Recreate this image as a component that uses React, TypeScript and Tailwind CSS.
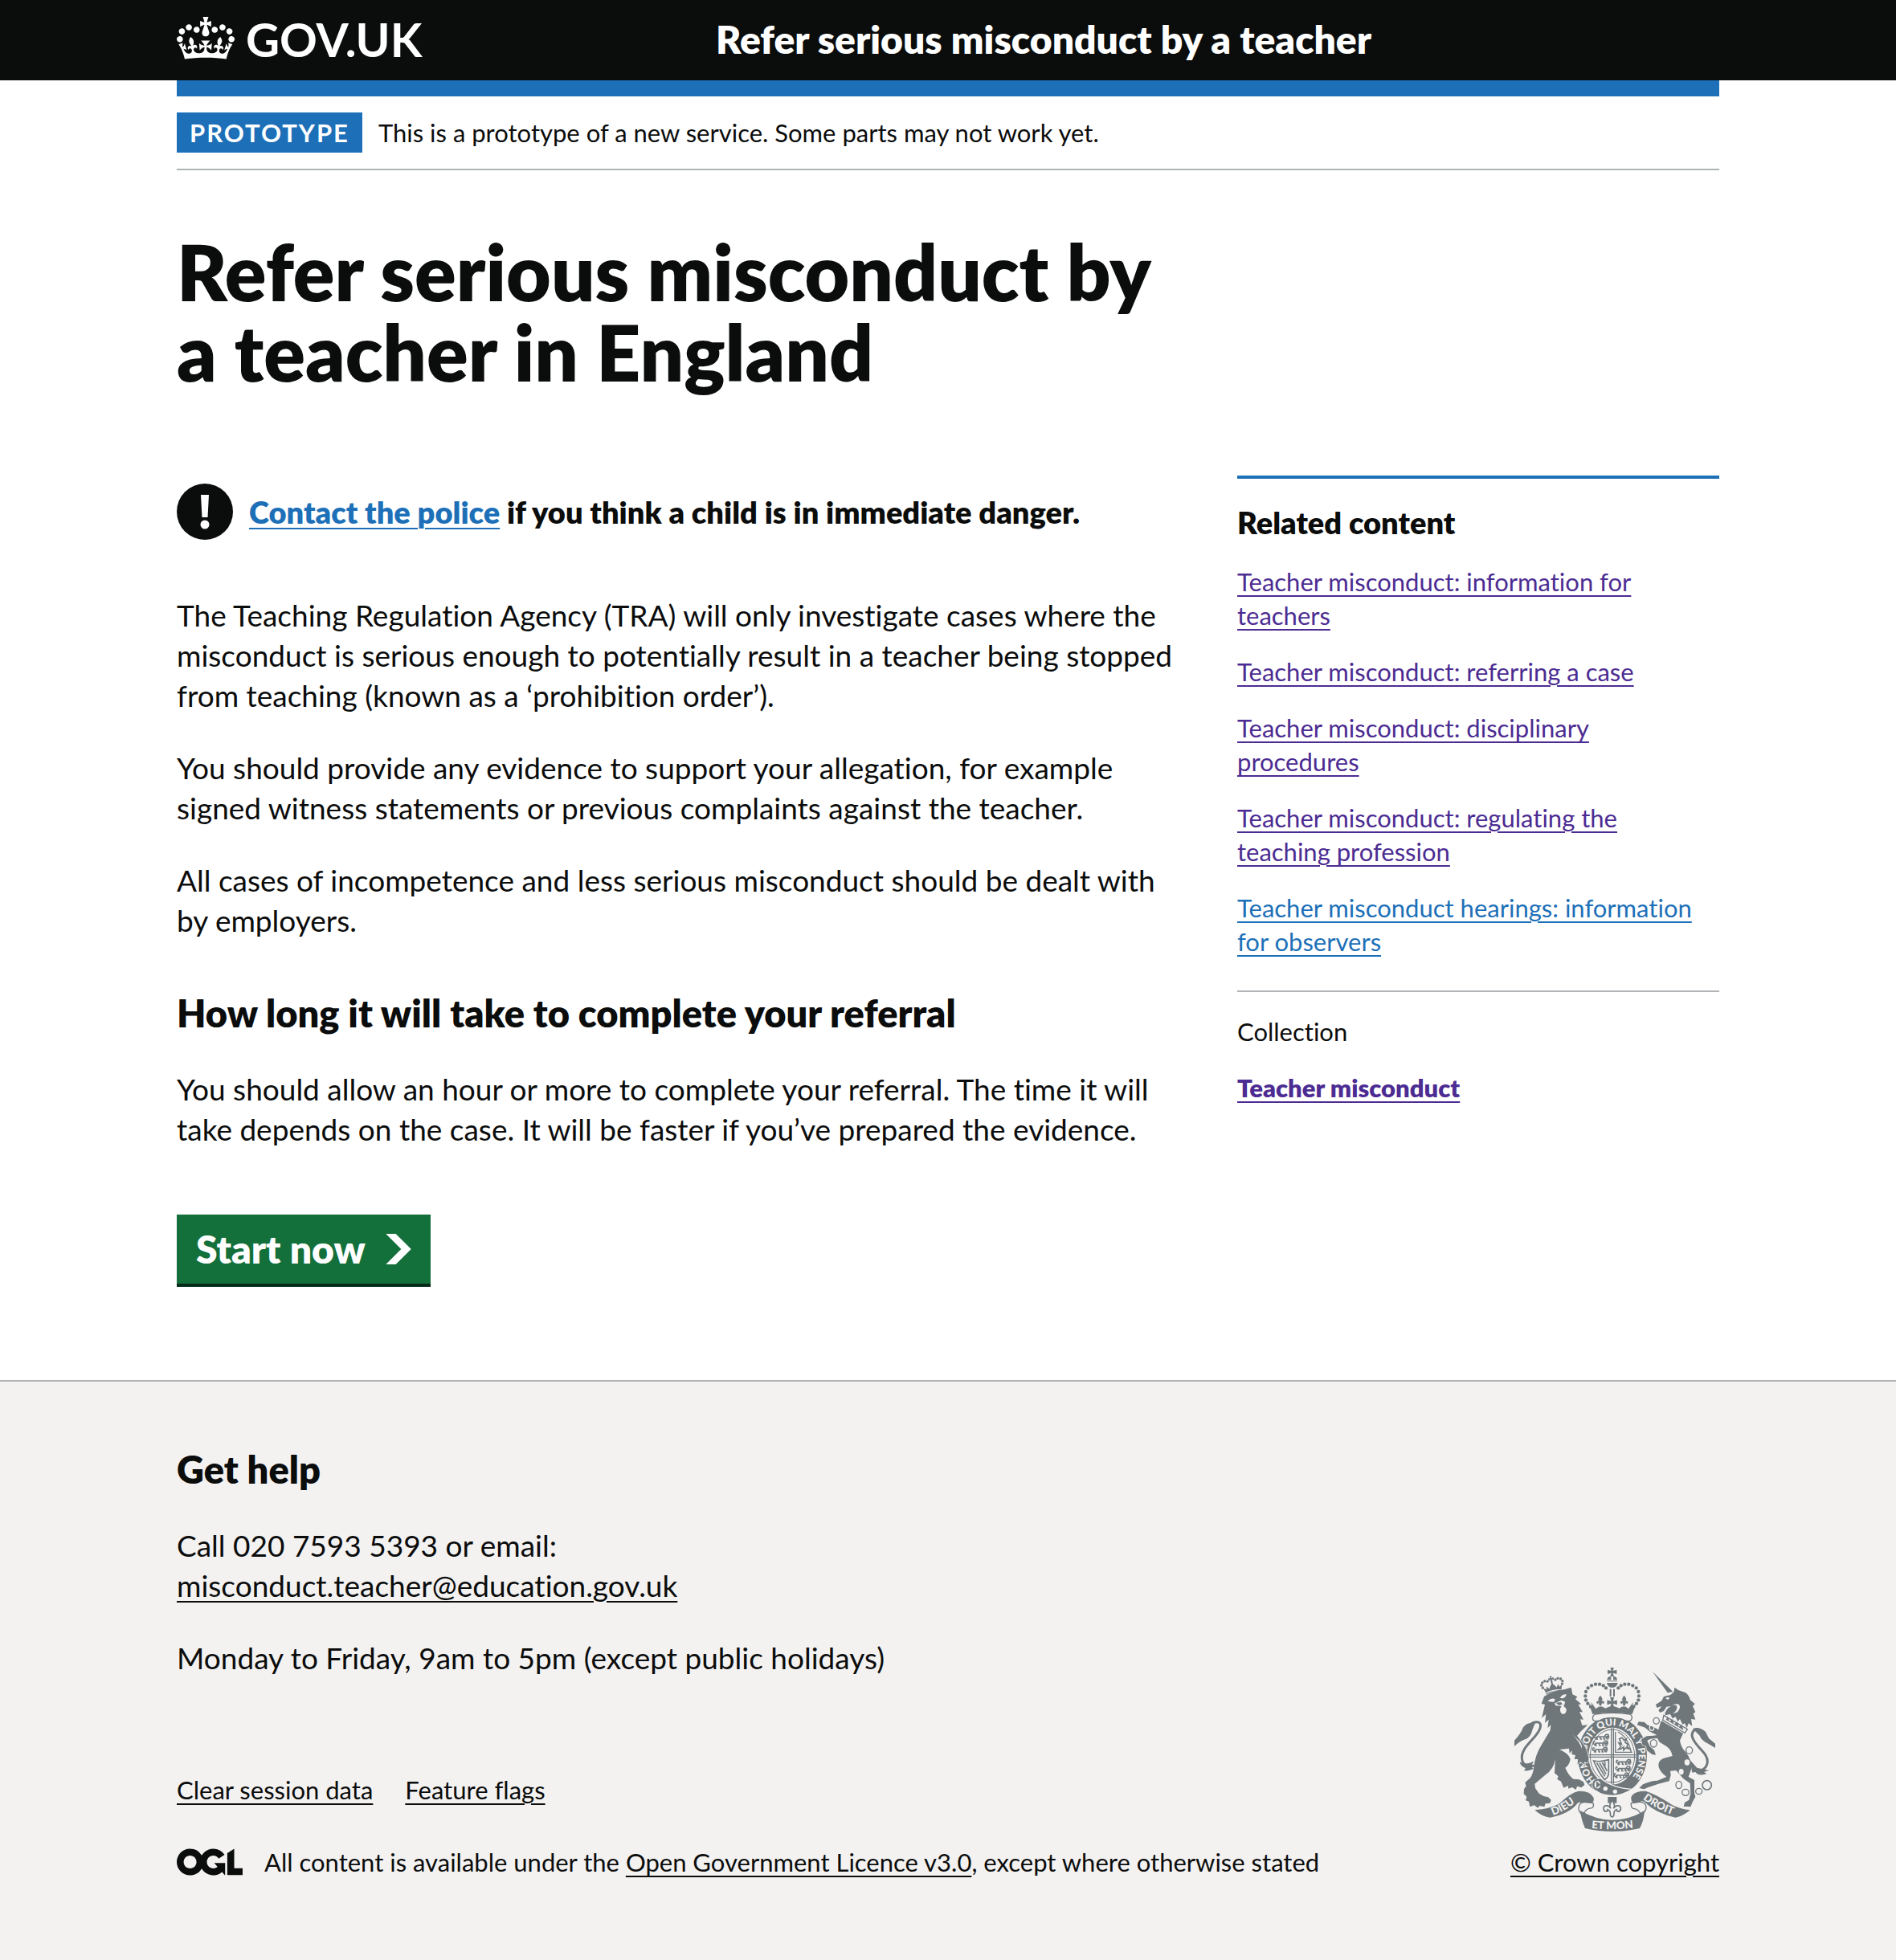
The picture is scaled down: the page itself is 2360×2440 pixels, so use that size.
import React from "react";

const textLink = "underline decoration-2 underline-offset-[5px]";

function CrownIcon() {
  return (
    <svg viewBox="0 0 132 97" className="mb-1 h-[53px] w-[72px] fill-current" aria-hidden="true">
      <path d="M25 30.2c3.5 1.5 7.7-.2 9.1-3.7 1.5-3.6-.2-7.8-3.9-9.2-3.6-1.4-7.6.3-9.1 3.9-1.4 3.5.3 7.5 3.9 9zM9 39.5c3.6 1.5 7.8-.2 9.2-3.7 1.5-3.6-.2-7.8-3.9-9.1-3.6-1.5-7.6.2-9.1 3.8-1.4 3.5.3 7.5 3.8 9zM4.4 57.2c3.5 1.5 7.7-.2 9.1-3.8 1.5-3.6-.2-7.7-3.9-9.1-3.5-1.5-7.6.3-9.1 3.8-1.4 3.5.3 7.6 3.9 9.1zm38.3-21.4c3.5 1.5 7.7-.2 9.1-3.8 1.5-3.6-.2-7.7-3.9-9.1-3.6-1.5-7.6.3-9.1 3.8-1.3 3.6.4 7.7 3.9 9.1zm64.4-5.6c-3.6 1.5-7.8-.2-9.1-3.7-1.5-3.6.2-7.8 3.8-9.2 3.6-1.4 7.7.3 9.2 3.9 1.3 3.5-.4 7.5-3.9 9zm15.9 9.3c-3.6 1.5-7.7-.2-9.1-3.7-1.5-3.6.2-7.8 3.7-9.1 3.6-1.5 7.7.2 9.2 3.8 1.5 3.5-.3 7.5-3.8 9zm4.7 17.7c-3.6 1.5-7.8-.2-9.2-3.8-1.5-3.6.2-7.7 3.9-9.1 3.6-1.5 7.7.3 9.2 3.8 1.3 3.5-.4 7.6-3.9 9.1zM89.3 35.8c-3.6 1.5-7.8-.2-9.2-3.8-1.4-3.6.2-7.7 3.9-9.1 3.6-1.5 7.7.3 9.2 3.8 1.4 3.6-.3 7.7-3.9 9.1zM69.7 17.7l8.9 4.7V9.3l-8.9 2.8c-.2-.3-.5-.6-.9-.9L72.4 0H59.6l3.5 11.2c-.3.3-.6.5-.9.9l-8.8-2.8v13.1l8.8-4.7c.3.3.6.7.9.9l-5 15.4v.1c-.2.8-.4 1.6-.4 2.4 0 4.1 3.1 7.5 7 8.1h.2c.3 0 .7.1 1 .1.4 0 .7 0 1-.1h.2c4-.6 7.1-4.1 7.1-8.1 0-.8-.1-1.7-.4-2.4V34l-5.1-15.4c.4-.2.7-.6 1-.9zM66 92.8c16.9 0 32.8 1.1 47.1 3.2 4-16.9 8.9-26.7 14-33.5l-9.6-3.4c1 4.9 1.1 7.2 0 10.2-1.5-1.4-3-4.3-4.2-8.7L108.6 76c2.8-2 5-3.2 7.5-3.3-4.4 9.4-10 11.9-13.6 11.2-4.3-.8-6.3-4.6-5.6-7.9 1-4.7 5.7-5.9 8-.5 4.3-8.7-3-11.4-7.6-8.8 7.1-7.2 7.9-13.5 2.1-21.1-8 6.1-8.1 12.3-4.5 20.8-4.7-5.4-12.1-2.5-9.5 6.2 3.4-5.2 7.9-2 7.2 3.1-.6 4.3-6.4 7.8-13.5 7.2-10.3-.9-10.9-8-11.2-13.8 2.5-.5 7.1 1.8 11 7.3L80.2 60c-4.1 4.4-8 5.3-12.3 5.4 1.4-4.4 8-11.6 8-11.6H55.5s6.4 7.2 7.9 11.6c-4.2-.1-8-1-12.3-5.4l1.4 16.4c3.9-5.5 8.5-7.7 10.9-7.3-.3 5.8-.9 12.8-11.1 13.8-7.2.6-12.9-2.9-13.5-7.2-.7-5 3.8-8.3 7.1-3.1 2.7-8.7-4.6-11.6-9.4-6.2 3.7-8.5 3.6-14.7-4.6-20.8-5.8 7.6-5 13.9 2.2 21.1-4.7-2.6-11.9.1-7.7 8.8 2.3-5.5 7.1-4.2 8.1.5.7 3.3-1.3 7.1-5.7 7.9-3.5.7-9-1.8-13.5-11.2 2.5.1 4.7 1.3 7.5 3.3l-4.7-15.4c-1.2 4.4-2.7 7.2-4.3 8.7-1.1-3-.9-5.3 0-10.2l-9.5 3.4c5 6.9 9.9 16.7 14 33.5 14.8-2.1 30.8-3.2 47.7-3.2z" />
    </svg>
  );
}

function OglLogo() {
  return (
    <svg viewBox="0 0 483.2 195.7" className="h-[34px] w-[82px] shrink-0 fill-current" role="img" aria-label="Open Government Licence">
      <path d="M421.5 142.8V.1l-50.7 32.3v161.1h112.4v-50.7zm-122.3-9.6A47.12 47.12 0 0 1 221 97.8c0-26 21.1-47.1 47.1-47.1 16.7 0 31.4 8.7 39.7 21.8l42.7-27.2A97.63 97.63 0 0 0 268.1 0c-36.5 0-68.3 20.1-85.1 49.7A98 98 0 0 0 97.8 0C43.9 0 0 43.9 0 97.8s43.9 97.8 97.8 97.8c36.5 0 68.3-20.1 85.1-49.7a97.76 97.76 0 0 0 149.6 25.4l19.4 22.2h3v-87.8h-80l24.3 27.5zM97.8 145c-26 0-47.1-21.1-47.1-47.1s21.1-47.1 47.1-47.1 47.1 21.1 47.1 47.1S123.8 145 97.8 145" />
    </svg>
  );
}

function WarningIcon() {
  return (
    <svg viewBox="0 0 70 70" className="size-[70px] shrink-0" role="img" aria-label="Warning">
      <circle cx="35" cy="35" r="35" fill="#0b0c0c" />
      <path d="M30 14h10l-1.5 28h-7z" fill="#fff" />
      <circle cx="35" cy="51" r="5.5" fill="#fff" />
    </svg>
  );
}

const arcDots: [number, number][] = [
  [357, 224], [346, 212], [339, 199], [337, 184], [339, 168], [347, 154], [360, 145], [375, 140], [390, 140], [404, 145], [414, 154],
];

const smallCrownDots: [number, number][] = [
  [176, 146], [173, 136], [178, 127], [188, 123], [198, 126], [228, 126], [238, 123], [248, 127], [253, 136], [250, 146],
];

function Fleur() {
  return <path d="M0-18C9-8 9-2 4 6C8 0 16 2 14 10C12 15 8 14 8 10C6 10 4 13 4 20H-4C-4 13-6 10-8 10C-8 14-12 15-14 10C-16 2-8 0-4 6C-9-2-9-8 0-18Z" />;
}

function CrossPatty() {
  return <path d="M-7-17H7L3-4L17-8V8L3 4L7 17H-7L-3 4L-17 8V-8L-3-4Z" />;
}

/* A passant lion, used in threes on the first and last quarters. */
function SmallLion() {
  return (
    <path
      d="M-30 5C-34-6-27-9-26-3M-28 6L-20 0H6L12-8H20L22-2L15 0L24 4M10 0L16 8H22M-20 1L-24 9H-18M-10 1L-8 9H-3M4 1V9H10"
      fill="none"
      strokeWidth="5"
    />
  );
}

function RoyalArms() {
  return (
    <svg viewBox="72 78 750 612" className="h-[204px] w-[250px]" fill="#6f777b" stroke="none" aria-hidden="true">
      <defs>
        <path id="garter" d="M376 500A98 116 0 1 1 494 506" />
        <path id="dieu" d="M214 630Q270 612 318 566" />
        <path id="etmon" d="M330 675Q438 689 546 673" />
        <path id="droit" d="M550 568Q600 606 668 630" />
      </defs>

      {/* Garter with motto */}
      <path fillRule="evenodd" d="M438 260A129 148 0 1 1 437.900 260ZM438 302A89 106 0 1 0 438.100 302Z" />
      <text fill="#f3f2f1" className="font-['Lato'] text-[36px] font-black">
        <textPath href="#garter">{"HONI\u2003SOIT QUI MAL Y PENSE"}</textPath>
      </text>

      {/* Lion's crown */}
      <g transform="rotate(-12 213 140)">
        <path d="M183 166L178 148L188 155L191 144L199 155L207 142H219L227 155L235 144L238 155L249 148L243 166Q213 158 183 166Z" />
        <path d="M183 169Q213 162 243 169V176Q213 169 183 176Z" />
        <g transform="translate(213 120) scale(.6)"><CrossPatty /></g>
        <rect x="210" y="128" width="6" height="18" />
        {smallCrownDots.map(([x, y]) => (
          <circle key={x + "-" + y} cx={x} cy={y} r="5" />
        ))}
      </g>

      {/* Lion */}
      <path
        d="M183 186Q215 162 258 160L284 152L289 178L307 187L300 196L321 214L311 217L327 244L315 244L330 272L318 271L325 294L346 292L322 314L306 332L324 356Q342 380 346 402L350 420L345 434L332 430L336 441L318 430L308 440L309 420L296 420L300 405L286 402L288 388L278 398L276 380L240 384Q276 398 281 420Q278 442 262 452Q272 478 292 494L314 496L330 505L334 516L322 526L306 521L302 534L288 525L274 530L272 519L256 527L246 503L232 495L236 484L222 472Q224 444 224 420Q220 458 186 480L148 512L150 528L164 548Q180 560 198 562L209 572L205 584L188 586L184 598L166 594L160 602L146 592L130 598L126 578L114 574L118 560L107 550L108 532L116 520L112 508L122 498Q138 490 144 456Q148 404 176 362L206 312L208 292L196 304L200 272L186 284L190 252L174 266L186 216L173 213Z"
        stroke="#f3f2f1"
        strokeWidth="4"
        paintOrder="stroke"
      />
      <g fill="#f3f2f1">
        <path d="M196 203Q212 188 224 196L220 206Q208 206 196 203Z" />
        <path d="M242 191Q252 176 266 178Q264 190 252 193Z" />
        <path d="M222 211L248 200L262 206L256 222L266 232Q268 250 254 252Q242 250 243 232L248 222L226 220Z" />
        <path d="M288 328L314 352Q326 366 324 380Q316 356 288 328Z" />
      </g>
      <path d="M226 209L246 207L252 215L238 219Z" />

      {/* Lion's tail */}
      <path d="M146 444Q108 452 101 424C90 376 156 344 168 304C178 272 142 280 132 292" fill="none" stroke="#6f777b" strokeWidth="9" />
      <path d="M150 284Q120 280 104 302Q98 322 72 350V372Q90 354 112 346Q134 338 140 308Z" />
      <path d="M92 430Q112 444 144 428L134 448L144 456Q122 466 108 462L114 454Q94 446 92 430Z" />

      {/* Shield quarters */}
      <g stroke="#6f777b" strokeWidth="4" fill="none">
        <ellipse cx="438" cy="408" rx="83" ry="99" strokeWidth="3" />
        <path d="M434 304V512M442 304V512M350 404H526M350 412H526" />
        <path d="M449 318V394H512M458 318Q496 336 508 394" />
      </g>
      <g stroke="#6f777b">
        <g transform="translate(402 336)"><SmallLion /></g>
        <g transform="translate(398 360)"><SmallLion /></g>
        <g transform="translate(396 384)"><SmallLion /></g>
        <g transform="translate(484 430)"><SmallLion /></g>
        <g transform="translate(482 455)"><SmallLion /></g>
        <g transform="translate(476 480)"><SmallLion /></g>
        <path d="M460 384L470 374L462 360L472 364L464 344L474 340L482 350L490 344L486 358L496 364L492 372L502 382L488 378L480 386L480 374L470 382Z" fill="none" strokeWidth="5" />
        <path d="M368 426Q392 432 424 422V468Q424 490 408 496Q386 470 368 426ZM380 434L410 484M390 434L414 476M400 432L418 464M410 430V452" fill="none" strokeWidth="5" />
      </g>

      {/* Garter strap and buckle */}
      <path d="M366 500L392 490Q440 530 512 532Q460 566 404 552Q378 544 362 520Z" stroke="#f3f2f1" strokeWidth="4" />
      <ellipse cx="382" cy="515" rx="15" ry="18" fill="#f3f2f1" stroke="#6f777b" strokeWidth="7" />
      <path d="M378 502L394 515L378 528Z" />
      <circle cx="412" cy="530" r="8" fill="#f3f2f1" />
      <circle cx="448" cy="541" r="8" fill="#f3f2f1" />

      {/* Pendant */}
      <path d="M421 561H454V584H421Z" />
      <path d="M437 574C448 588 448 596 442 604C452 588 470 592 469 606C466 620 452 616 454 608C448 610 444 614 444 622C444 640 430 640 430 622C430 614 426 610 420 608C422 616 408 620 405 606C404 592 422 588 432 604C426 596 426 588 437 574Z" fill="#f3f2f1" stroke="#6f777b" strokeWidth="5" />

      {/* Royal crown */}
      <g transform="translate(437 94)"><CrossPatty /></g>
      <path d="M425 112H433V124H418Q418 116 425 112ZM441 112H449Q456 116 456 124H441ZM418 127H456V130H418ZM417 135H458Q456 152 437 153Q420 152 417 135Z" />
      <path d="M428 158H434V186H428ZM441 158H447V186H441Z" />
      {arcDots.map(([x, y]) => (
        <g key={x + "-" + y}>
          <circle cx={x} cy={y} r="6.500" />
          <circle cx={874 - x} cy={y} r="6.500" />
        </g>
      ))}
      <g transform="translate(393 200)"><Fleur /></g>
      <g transform="translate(482 200)"><Fleur /></g>
      <g transform="translate(437 208) scale(1.1)"><CrossPatty /></g>
      <path d="M350 212L362 222L358 206L376 232Q393 214 412 230Q437 214 464 230Q482 214 498 232L516 206L512 222L526 212L512 252Q437 240 364 252Z" />
      <path d="M374 252Q437 242 504 252Q516 260 508 274Q498 284 474 270Q437 260 402 270Q376 284 366 274Q360 260 374 252Z" fill="#f3f2f1" stroke="#6f777b" strokeWidth="4" />

      {/* Unicorn */}
      <path d="M588 93L664 168L644 172Z" />
      <path d="M655 180L668 168L670 152L684 162L712 172Q726 184 728 198L746 214L738 222L748 244L740 250L748 272L732 270L736 296L722 286L716 304L708 286L700 290L690 270L682 280L674 262L662 268L654 252L636 256L634 248Q644 226 658 222L640 224L630 240L616 246L610 238L622 222L604 228L600 216L622 202L630 186Z" />
      <path d="M636 192Q648 186 652 192L644 198ZM660 218Q690 206 690 226Q688 246 664 250Q684 236 678 220Q670 216 660 218Z" fill="#f3f2f1" />
      <path d="M630 256L718 308L708 322L626 274Z" fill="#f3f2f1" stroke="#6f777b" strokeWidth="4" />
      <path d="M638 272L644 262L652 280L662 270L668 290L680 280L686 300L696 290L704 312Z" />
      <path
        d="M620 276L702 324L690 350Q694 376 712 394Q736 424 732 458L722 486L744 498V546L748 560L738 578L730 598L704 596L708 582L724 572L730 548L728 510L702 492L676 462L654 464L656 480L650 502L610 512L570 526L556 532L538 528L552 514Q580 500 606 500L640 486Q608 462 610 438Q614 418 640 414L662 408Q658 384 640 372L614 356L606 342Q576 342 568 352L578 372L594 386L600 404L586 402L566 386L564 372L550 366L546 346L566 334L592 332L604 330L576 316L560 302L544 296L530 292L536 280L558 282L568 292L592 300L610 310Z"
        stroke="#f3f2f1"
        strokeWidth="4"
        paintOrder="stroke"
      />
      <path d="M738 306Q762 296 786 318L798 342L822 362V378L796 362Q770 350 764 332Z" />
      <path d="M762 312C738 302 728 328 742 350C758 380 794 398 793 430C790 456 770 466 748 462" fill="none" stroke="#6f777b" strokeWidth="9" />
      <path d="M700 392L754 452L798 462L780 468L790 474Q760 486 748 468L736 470L730 440Z" />
      <g fill="#f3f2f1">
        <ellipse cx="717" cy="432" rx="10" ry="11" />
        <ellipse cx="695" cy="467" rx="9" ry="11" />
      </g>
      <g fill="none" stroke="#6f777b" strokeWidth="4">
        <ellipse cx="602" cy="277" rx="11" ry="12" />
        <ellipse cx="585" cy="302" rx="8" ry="11" stroke="#f3f2f1" />
        <ellipse cx="592" cy="361" rx="12" ry="14" />
        <ellipse cx="725" cy="387" rx="12" ry="13" />
        <ellipse cx="686" cy="516" rx="11" ry="14" />
        <ellipse cx="711" cy="544" rx="13" ry="12" />
        <ellipse cx="761" cy="540" rx="12" ry="11" />
        <circle cx="791" cy="517" r="17" strokeWidth="5" />
      </g>

      {/* Ribbon */}
      <path d="M148 610Q206 606 240 586Q280 546 312 539Q356 538 368 564Q372 584 350 590Q318 576 308 584Q280 622 206 638Q176 636 148 610Z" />
      <path d="M728 610Q690 606 660 590Q600 550 562 539Q518 538 508 562Q506 580 524 590Q544 572 556 578Q600 622 674 638Q700 634 728 610Z" />
      <g fill="#f3f2f1" stroke="#6f777b" strokeWidth="4">
        <path d="M350 582Q312 574 312 606Q314 622 330 630Q334 604 362 602Q370 596 366 584Z" />
        <path d="M524 582Q562 574 564 600Q564 616 544 630Q540 606 514 604Q506 598 508 584Z" />
      </g>
      <path d="M318 612Q380 648 438 647Q500 648 558 612Q556 650 540 678Q490 690 438 690Q384 690 336 678Q322 648 318 612Z" />
      <g fill="#f3f2f1" className="font-['Lato'] text-[40px] font-black">
        <text><textPath href="#dieu" startOffset="2">DIEU</textPath></text>
        <text textAnchor="middle"><textPath href="#etmon" startOffset="50%">ET MON</textPath></text>
        <text><textPath href="#droit" startOffset="2">DROIT</textPath></text>
      </g>
    </svg>
  );
}

const relatedLinks = [
  { text: "Teacher misconduct: information for teachers", visited: true },
  { text: "Teacher misconduct: referring a case", visited: true },
  { text: "Teacher misconduct: disciplinary procedures", visited: true },
  { text: "Teacher misconduct: regulating the teaching profession", visited: true },
  { text: "Teacher misconduct hearings: information for observers", visited: false },
];

export default function App() {
  return (
    <div className="flex min-h-screen flex-col bg-white font-['Lato',sans-serif] text-[37px] leading-[50px] text-[#0b0c0c] [font-variant-ligatures:none]">
      <header className="bg-[#0b0c0c] text-white">
        <div className="mx-auto grid h-[100px] max-w-[1920px] grid-cols-[671px_1fr] items-center pb-[2px]">
          <a href="#home" className="flex items-center gap-[14px]">
            <CrownIcon />
            <span className="text-[58px] leading-[60px] font-bold">GOV.UK</span>
          </a>
          <a href="#service" className="text-[48px] leading-[60px] font-extrabold">
            Refer serious misconduct by a teacher
          </a>
        </div>
      </header>

      <div className="mx-auto w-full max-w-[1920px]">
        <div className="h-5 bg-[#1d70b8]" />
        <div className="flex items-center gap-5 border-b-2 border-[#b1b4b6] py-5 text-[31px] leading-[50px]">
          <strong className="bg-[#1d70b8] px-4 font-bold tracking-[2px] text-white">PROTOTYPE</strong>
          <span>This is a prototype of a new service. Some parts may not work yet.</span>
        </div>

        <main className="pt-[76px] pb-[116px]">
          <h1 className="w-2/3 text-[96px] leading-[100px] font-extrabold">
            Refer serious misconduct by a&nbsp;teacher in England
          </h1>
          <div className="mt-[104px] grid grid-cols-[1fr_600px] gap-[60px]">
            <div>
              <div className="mt-[10px] mb-[69px] flex items-center gap-5">
                <WarningIcon />
                <strong className="text-[38px] font-extrabold">
                  <a href="#police" className={`${textLink} text-[#1d70b8]`}>Contact the police</a> if you think a child is in immediate danger.
                </strong>
              </div>
              <div className="flex flex-col gap-10">
                <p>
                  The Teaching Regulation Agency (TRA) will only investigate cases where the misconduct is serious enough to potentially result in a teacher being stopped from teaching (known as a ‘prohibition order’).
                </p>
                <p>
                  You should provide any evidence to support your allegation, for example signed witness statements or previous complaints against the teacher.
                </p>
                <p>All cases of incompetence and less serious misconduct should be dealt with by employers.</p>
              </div>
              <h2 className="mt-[60px] mb-10 text-[47px] leading-[60px] font-extrabold">
                How long it will take to complete your referral
              </h2>
              <p>
                You should allow an hour or more to complete your referral. The time it will take depends on the case. It will be faster if you’ve prepared the evidence.
              </p>
              <button className="mt-[81px] flex h-[90px] items-center gap-[25px] border-b-4 border-[#052b19] bg-[#13703b] px-6 text-[48px] leading-[60px] font-extrabold text-white">
                Start now
                <svg viewBox="0 0 33 40" className="h-[38px] w-8 fill-current" aria-hidden="true">
                  <path d="M0 0h13l20 20-20 20H0l20-20z" />
                </svg>
              </button>
            </div>

            <aside className="self-start border-t-4 border-[#1d70b8] pt-[29px] text-[31px] leading-[42px]">
              <h2 className="mb-7 text-[38px] leading-[50px] font-extrabold">Related content</h2>
              <ul className="flex flex-col gap-7 pr-5">
                {relatedLinks.map((link) => (
                  <li key={link.text}>
                    <a href="#related" className={`${textLink} ${link.visited ? "text-[#4c2c92]" : "text-[#1d70b8]"}`}>
                      {link.text}
                    </a>
                  </li>
                ))}
              </ul>
              <p className="mt-10 mb-7 border-t-2 border-[#b1b4b6] pt-7">Collection</p>
              <a href="#collection" className={`${textLink} font-extrabold text-[#4c2c92]`}>Teacher misconduct</a>
            </aside>
          </div>
        </main>
      </div>

      <footer className="grow border-t-2 border-[#b1b4b6] bg-[#f3f2f1]">
        <div className="mx-auto max-w-[1920px] pt-[79px]">
          <h2 className="mb-10 text-[47px] leading-[60px] font-extrabold">Get help</h2>
          <p>
            Call 020 7593 5393 or email:
            <br />
            <a href="mailto:misconduct.teacher@education.gov.uk" className={textLink}>misconduct.teacher@education.gov.uk</a>
          </p>
          <div className="flex items-end justify-between text-[31px] leading-10">
            <div>
              <p className="mt-10 mb-[119px] text-[37px] leading-[50px]">Monday to Friday, 9am to 5pm (except public holidays)</p>
              <ul className="mb-[50px] flex gap-10">
                <li><a href="#clear" className={textLink}>Clear session data</a></li>
                <li><a href="#flags" className={textLink}>Feature flags</a></li>
              </ul>
              <div className="flex items-center gap-[27px]">
                <OglLogo />
                <span>
                  All content is available under the <a href="#licence" className={textLink}>Open Government Licence v3.0</a>, except where otherwise stated
                </span>
              </div>
            </div>
            <a href="#crown-copyright" className={`${textLink} flex flex-col items-center gap-[18px]`}>
              <RoyalArms />
              <span>© Crown copyright</span>
            </a>
          </div>
        </div>
      </footer>
    </div>
  );
}
